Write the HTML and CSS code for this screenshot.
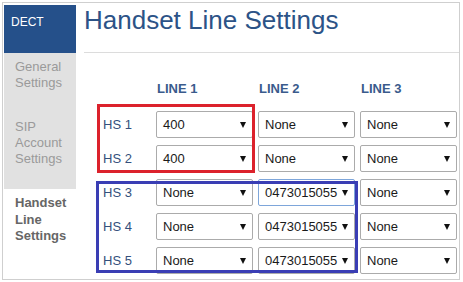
FILE: index.html
```html
<!DOCTYPE html>
<html>
<head>
<meta charset="utf-8">
<link rel="stylesheet" href="styles.css">
</head>
<body>
<div class="frame">
  <nav class="sidebar">
    <div class="nav-item nav-active">DECT</div>
    <div class="nav-item nav-gray">General Settings</div>
    <div class="nav-item nav-gray nav-sip">SIP Account Settings</div>
    <div class="nav-item nav-current">Handset Line Settings</div>
  </nav>
  <main class="main">
    <h1 class="title">Handset Line Settings</h1>
    <div class="grid-wrap">
      <div class="grid">
        <div></div>
        <div class="col-head">LINE 1</div>
        <div class="col-head">LINE 2</div>
        <div class="col-head">LINE 3</div>

        <div class="hs">HS 1</div>
        <div class="sel"><span>400</span><i class="arrow"></i></div>
        <div class="sel"><span>None</span><i class="arrow"></i></div>
        <div class="sel"><span>None</span><i class="arrow"></i></div>

        <div class="hs">HS 2</div>
        <div class="sel"><span>400</span><i class="arrow"></i></div>
        <div class="sel"><span>None</span><i class="arrow"></i></div>
        <div class="sel"><span>None</span><i class="arrow"></i></div>

        <div class="hs">HS 3</div>
        <div class="sel"><span>None</span><i class="arrow"></i></div>
        <div class="sel sel-focus"><span>0473015055</span><i class="arrow"></i></div>
        <div class="sel"><span>None</span><i class="arrow"></i></div>

        <div class="hs">HS 4</div>
        <div class="sel"><span>None</span><i class="arrow"></i></div>
        <div class="sel"><span>0473015055</span><i class="arrow"></i></div>
        <div class="sel"><span>None</span><i class="arrow"></i></div>

        <div class="hs">HS 5</div>
        <div class="sel"><span>None</span><i class="arrow"></i></div>
        <div class="sel"><span>0473015055</span><i class="arrow"></i></div>
        <div class="sel"><span>None</span><i class="arrow"></i></div>
      </div>
      <div class="mark mark-red"></div>
      <div class="mark mark-blue"></div>
    </div>
  </main>
</div>
</body>
</html>
```

FILE: styles.css
```css
* { box-sizing: border-box; }
html, body { margin: 0; padding: 0; background: #fff; }
body {
  font-family: "Liberation Sans", Arial, sans-serif;
  font-size: 13px;
  width: 463px;
  height: 282px;
  overflow: hidden;
}
.frame {
  margin: 2px 0 0 2px;
  width: 458px;
  height: 278px;
  border: 1px solid #cfcfcf;
  padding: 2px 0 0 1px;
  display: flex;
}
.sidebar {
  width: 72px;
  flex: none;
  display: flex;
  flex-direction: column;
}
.nav-item {
  line-height: 16px;
  padding: 6px 11px 22px 11px;
}
.nav-active {
  background: #25508a;
  color: #fff;
  height: 48px;
  padding: 9px 7px 0 7px;
  font-size: 12px;
}
.nav-gray {
  background: #e1e1e1;
  color: #9a9a9a;
}
.nav-current {
  background: #fff;
  color: #666;
  font-weight: bold;
  line-height: 16.5px;
}
.main {
  flex: 1;
  margin-left: 8px;
  display: flex;
  flex-direction: column;
}
.title {
  margin: 0;
  font-weight: normal;
  font-size: 26px;
  line-height: 30px;
  color: #2c5387;
  padding-bottom: 17px;
  border-bottom: 1px solid #dcdcdc;
}
.grid-wrap {
  position: relative;
  margin-top: 29px;
  margin-left: 14px;
}
.grid {
  display: grid;
  grid-template-columns: 53px 97px 97px 97px;
  grid-template-rows: 22px repeat(5, 27px);
  column-gap: 5px;
  row-gap: 7px;
}
.col-head {
  font-weight: bold;
  color: #3a5b8c;
  line-height: 14px;
  align-self: start;
  padding-left: 1px;
}
.hs {
  color: #34507c;
  align-self: center;
  padding-left: 5px;
  line-height: 16px;
}
.sel {
  border: 1px solid #ababab;
  border-radius: 2px;
  background: #fff;
  display: flex;
  align-items: center;
  justify-content: space-between;
  padding: 0 6px 0 6px;
  color: #1a1a1a;
}
.sel-focus {
  border-color: #7ea6da;
}
.arrow {
  width: 0;
  height: 0;
  border-left: 3px solid transparent;
  border-right: 3px solid transparent;
  border-top: 6px solid #111;
  margin-top: 1px;
}
.mark {
  position: absolute;
  pointer-events: none;
  border: 3px solid;
}
.mark-red {
  border-color: #dc222c;
  left: -1px;
  top: 22px;
  width: 158px;
  height: 69px;
}
.mark-blue {
  border-color: #3a3eb4;
  left: -2px;
  top: 99px;
  width: 262px;
  height: 92px;
}
```
